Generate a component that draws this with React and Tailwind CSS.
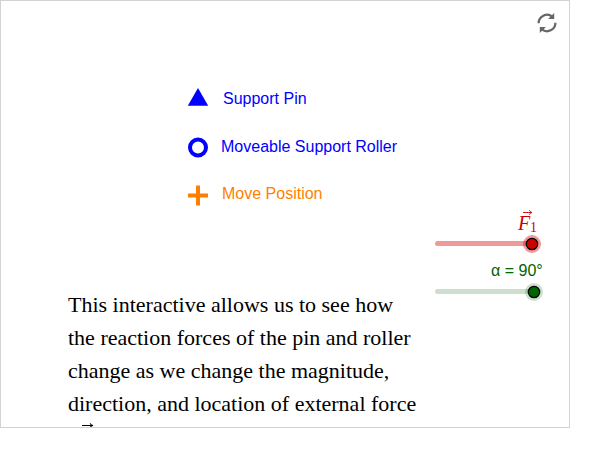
function LegendRow({ label, color, icon, textClass }) {
  return (
    <div className={`flex h-12 ${color}`}>
      <svg width="22" height="48" viewBox="0 0 22 48" className="shrink-0">
        {icon}
      </svg>
      <span className={`whitespace-nowrap text-base leading-6 ${textClass}`}>{label}</span>
    </div>
  );
}

function Slider({ track, halo, knob, position }) {
  return (
    <svg width="116" height="20" viewBox="0 0 116 20" className="block">
      <line x1="2.5" y1="9.5" x2={position} y2="9.5" stroke={track} strokeWidth="5" strokeLinecap="round" />
      <circle cx={position} cy="10" r="9" fill={halo} />
      <circle cx={position} cy="10" r="5.7" fill={knob} stroke="#000" strokeWidth="1.2" />
    </svg>
  );
}

function ForceLabel() {
  return (
    <div className="ml-[82px] flex h-[25px] w-6 flex-col text-[#cc0000]">
      <svg width="24" height="6" viewBox="0 0 24 6" className="block shrink-0">
        <path d="M6 3.5H14.5M12.4 1.3Q13.1 3.1 15 3.5Q13.1 3.9 12.4 5.7" fill="none" stroke="currentColor" strokeWidth="0.9" />
      </svg>
      <div className="flex h-[19px] font-['Liberation_Serif',serif]">
        <span className="ml-px w-[12px] text-[20px] italic leading-[17px]">F</span>
        <span className="mt-[6px] text-[14px] leading-[14px]">1</span>
      </div>
    </div>
  );
}

export default function App() {
  return (
    <div className="h-[450px] w-[600px] overflow-hidden bg-white font-['Liberation_Sans',Arial,sans-serif]">
      <div className="flex h-[428px] w-[570px] overflow-hidden border border-[#d3d3d3] bg-white">
        <main className="w-[434px] shrink-0 pl-[67px] pt-[73px]">
          <section className="ml-[119px] h-[214px]">
            <LegendRow
              label="Support Pin"
              color="text-[#0000ff]"
              textClass="ml-[14px] mt-[13px]"
              icon={<path d="M11 14L21.2 31.8H0.8Z" fill="currentColor" />}
            />
            <LegendRow
              label="Moveable Support Roller"
              color="text-[#0000ff]"
              textClass="ml-[12px] mt-[13px]"
              icon={<circle cx="11" cy="25.5" r="8" fill="none" stroke="currentColor" strokeWidth="4" />}
            />
            <LegendRow
              label="Move Position"
              color="text-[#ff7f00]"
              textClass="ml-[13px] mt-3"
              icon={<path d="M1 25.5H21M11 15.5V35.5" stroke="currentColor" strokeWidth="4" />}
            />
          </section>
          <p className="whitespace-nowrap font-['Liberation_Serif',serif] text-[22px] leading-[33px] text-black">
            This interactive allows us to see how
            <br />
            the reaction forces of the pin and roller
            <br />
            change as we change the magnitude,
            <br />
            direction, and location of external force
          </p>
          <svg width="30" height="10" viewBox="0 0 30 10" className="mt-[2px] block">
            <path d="M14 3.5H24.5M22.2 1.3Q22.8 3.1 25 3.5Q22.8 3.9 22.2 5.7" fill="none" stroke="#000" strokeWidth="1.1" />
          </svg>
        </main>
        <aside className="flex flex-col">
          <button aria-label="Reset" className="ml-[101px] mt-[11px] h-[22px] w-[22px] text-[#666]">
            <svg width="22" height="22" viewBox="0 0 22 22" className="block">
              <path d="M2.6 11.2A8.4 8.4 0 0 1 16.2 4.6M19.4 10.8A8.4 8.4 0 0 1 5.8 17.4" fill="none" stroke="currentColor" strokeWidth="2.2" />
              <path d="M18.2 0.9V7H12.1ZM3.8 21.1V15H9.9Z" fill="currentColor" />
            </svg>
          </button>
          <div className="mt-[175px]">
            <ForceLabel />
            <Slider track="#f09999" halo="rgba(214,0,0,0.4)" knob="#cc0000" position={97} />
          </div>
          <div className="mt-[5px]">
            <div className="ml-[56px] h-[23px] whitespace-nowrap text-base leading-6 text-[#006400]">α = 90°</div>
            <Slider track="#ccdfcc" halo="rgba(0,100,0,0.2)" knob="#006400" position={99} />
          </div>
        </aside>
      </div>
    </div>
  );
}
